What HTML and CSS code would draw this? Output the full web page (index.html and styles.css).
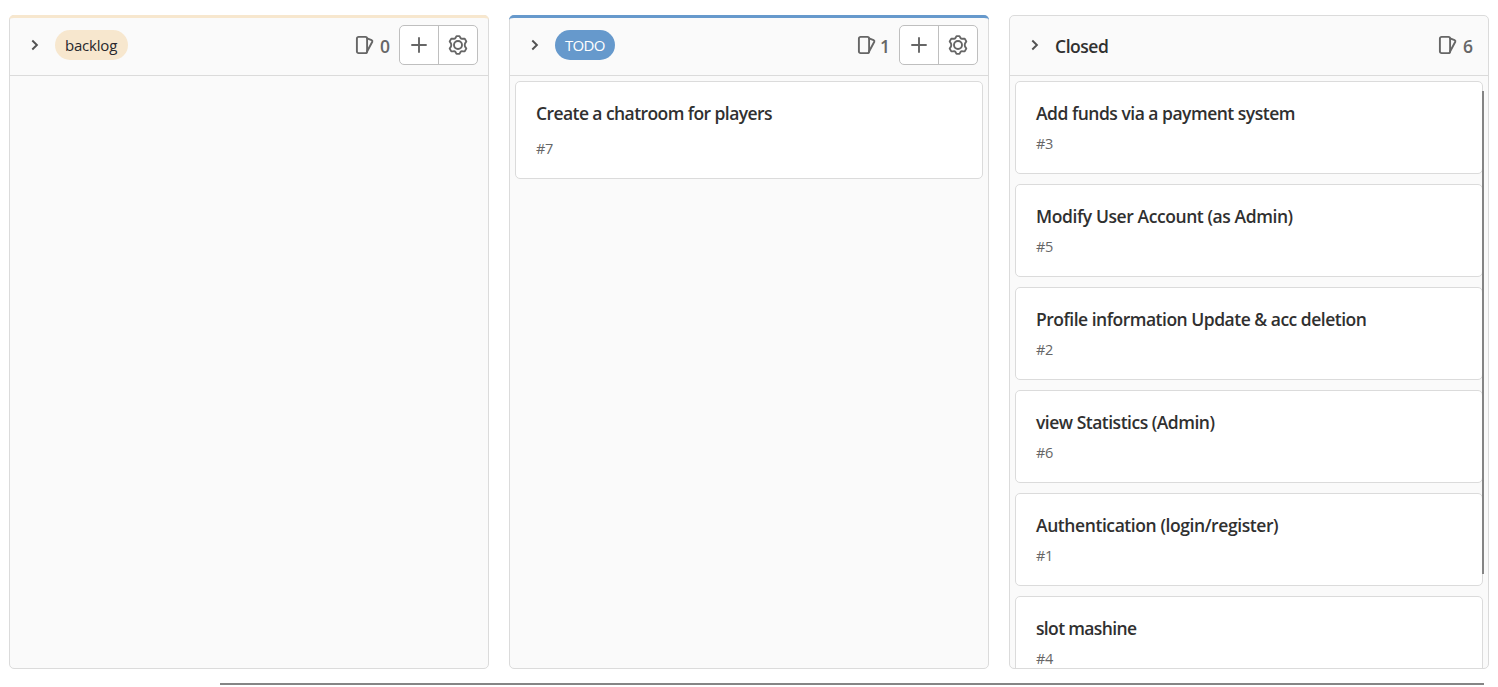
FILE: index.html
```html
<!DOCTYPE html>
<html lang="en">
<head>
<meta charset="utf-8">
<title>Issue board</title>
<link rel="stylesheet" href="styles.css">
</head>
<body>
<svg class="sprite" width="0" height="0">
  <symbol id="chevron" viewBox="0 0 8 12"><path d="M1.3 1.5L5.9 6L1.3 10.5"/></symbol>
  <symbol id="issues" viewBox="0 0 20 20"><rect x="1.9" y="1.9" width="10.2" height="16.2" rx="1.7"/><path d="M12.1 3.4L16.6 5.2Q17.7 5.7 17.3 6.8L12.2 16.3"/></symbol>
  <symbol id="plus" viewBox="0 0 20 20"><path d="M10 3V17M3 10H17"/></symbol>
  <symbol id="gear" viewBox="0 0 20 20"><path d="M8.5 1.1H11.5L12.6 3.1Q13.3 4 14.4 3.8L16.7 3.6L18.3 6.4L17 8.5Q16.4 10 17 11.5L18.3 13.6L16.7 16.4L14.4 16.2Q13.3 16 12.6 16.9L11.5 18.9H8.5L7.4 16.9Q6.7 16 5.6 16.2L3.3 16.4L1.7 13.6L3 11.5Q3.6 10 3 8.5L1.7 6.4L3.3 3.6L5.6 3.8Q6.7 4 7.4 3.1Z"/><circle cx="10" cy="10" r="4"/></symbol>
</svg>
<main class="board">
  <section class="list list-backlog">
    <header class="list-header">
      <svg class="chevron"><use href="#chevron"/></svg>
      <span class="label label-backlog">backlog</span>
      <span class="count"><svg class="icon"><use href="#issues"/></svg><span class="number">0</span></span>
      <div class="actions"><button><svg class="icon"><use href="#plus"/></svg></button><button><svg class="icon"><use href="#gear"/></svg></button></div>
    </header>
    <div class="cards"></div>
  </section>
  <section class="list list-todo">
    <header class="list-header">
      <svg class="chevron"><use href="#chevron"/></svg>
      <span class="label label-todo">TODO</span>
      <span class="count"><svg class="icon"><use href="#issues"/></svg><span class="number">1</span></span>
      <div class="actions"><button><svg class="icon"><use href="#plus"/></svg></button><button><svg class="icon"><use href="#gear"/></svg></button></div>
    </header>
    <div class="cards">
      <article class="card card-tall"><h4 class="tight">Create a chatroom for players</h4><p>#7</p></article>
    </div>
  </section>
  <section class="list list-closed">
    <header class="list-header">
      <svg class="chevron"><use href="#chevron"/></svg>
      <h3>Closed</h3>
      <span class="count"><svg class="icon"><use href="#issues"/></svg><span class="number">6</span></span>
    </header>
    <div class="cards">
      <article class="card"><h4 class="snug">Add funds via a payment system</h4><p>#3</p></article>
      <article class="card"><h4>Modify User Account (as Admin)</h4><p>#5</p></article>
      <article class="card"><h4 class="snug">Profile information Update &amp; acc deletion</h4><p>#2</p></article>
      <article class="card"><h4 class="snug">view Statistics (Admin)</h4><p>#6</p></article>
      <article class="card"><h4>Authentication (login/register)</h4><p>#1</p></article>
      <article class="card"><h4 class="tighter">slot mashine</h4><p>#4</p></article>
    </div>
    <div class="scroll-y"></div>
  </section>
</main>
<div class="scroll-x"></div>
</body>
</html>
```
FILE: styles.css
```css
* { box-sizing: border-box; }
body {
  margin: 0;
  height: 687px;
  overflow: hidden;
  background: #fff;
  color: #303030;
  font-family: "Open Sans", "Noto Sans", sans-serif;
}
.sprite { position: absolute; }
.board {
  display: grid;
  grid-template-columns: repeat(3, 480px);
  gap: 20px;
  height: 669px;
  padding: 15px 9px 0;
}
.list {
  position: relative;
  display: flex;
  flex-direction: column;
  min-height: 0;
  background: #fafafa;
  border: 1px solid #dbdbdb;
  border-radius: 5px;
}
.list-header {
  display: flex;
  align-items: center;
  flex: none;
  height: 60px;
  padding: 0 16px 2px 21px;
  border-bottom: 1px solid #dbdbdb;
}
.list-backlog .list-header,
.list-todo .list-header {
  margin: -1px -1px 0;
  height: 61px;
  padding: 0 11px 3px 22px;
  border-top: 3px solid #f7e7ce;
  border-radius: 5px 5px 0 0;
}
.list-todo .list-header { border-top-color: #69c; }
.list-closed .list-header { padding-right: 15px; }
svg { fill: none; stroke: #666; stroke-width: 1.9; stroke-linejoin: round; stroke-linecap: round; }
.chevron { width: 8px; height: 12px; margin-right: 16px; stroke: #525252; stroke-linecap: butt; stroke-linejoin: miter; }
.icon { display: block; width: 20px; height: 20px; }
.label {
  height: 30px;
  padding: 0 10px;
  border-radius: 15px;
  font-size: 15px;
  line-height: 31px;
}
.label-backlog { width: 73px; background: #f7e7ce; color: #28272d; letter-spacing: -0.2px; }
.label-todo { width: 60px; background: #69c; color: #fff; letter-spacing: -0.7px; }
h3 { margin: 3px 0 0; font-size: 17.5px; line-height: 24px; font-weight: 600; letter-spacing: -0.45px; }
.count {
  display: flex;
  align-items: center;
  gap: 5px;
  margin-left: auto;
  color: #666;
  font-size: 17.5px;
  font-weight: 600;
  line-height: 24px;
}
.list-todo .count { gap: 3px; }
.number { padding-top: 2px; }
.actions {
  display: flex;
  width: 79px;
  height: 40px;
  margin-left: 9px;
  border: 1px solid #bfbfbf;
  border-radius: 5px;
  background: #fff;
}
button {
  display: flex;
  flex: 1;
  align-items: center;
  justify-content: center;
  padding: 0;
  border: 0;
  background: none;
}
button + button { border-left: 1px solid #bfbfbf; }
.cards {
  display: flex;
  flex-direction: column;
  gap: 10px;
  flex: 1;
  min-height: 0;
  padding: 5px;
  overflow: hidden;
}
.card {
  flex: none;
  height: 93px;
  padding: 19px 20px;
  background: #fff;
  border: 1px solid #dbdbdb;
  border-radius: 5px;
}
.card-tall { height: 98px; }
h4 { margin: 0; font-size: 17.5px; line-height: 24px; font-weight: 600; letter-spacing: -0.42px; white-space: nowrap; }
h4.snug { letter-spacing: -0.5px; }
h4.tight { letter-spacing: -0.58px; }
h4.tighter { letter-spacing: -0.65px; }
.card p { margin: 8px 0 0; color: #666; font-size: 14.5px; line-height: 22px; letter-spacing: -0.3px; }
.card-tall p { margin-top: 13px; }
.scroll-y {
  position: absolute;
  top: 75px;
  right: 4px;
  width: 2px;
  height: 483px;
  background: #858585;
}
.scroll-x { width: 1264px; height: 2px; margin: 14px 0 0 220px; background: #858585; }
```
